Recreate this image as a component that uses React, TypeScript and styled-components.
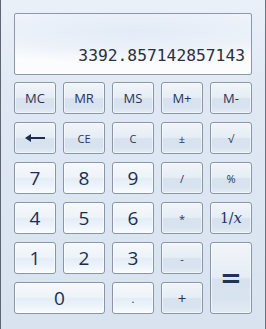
import styled, { createGlobalStyle, css } from 'styled-components';

const GlobalStyle = createGlobalStyle`
  html, body {
    margin: 0;
    padding: 0;
    background: #d9e3ef;
  }
`;

const Window = styled.div`
  box-sizing: border-box;
  width: 266px;
  height: 329px;
  padding: 13px 13px 0 13px;
  border-left: 1px solid #5f6673;
  border-right: 1px solid #6b7280;
  background: linear-gradient(180deg, #eaf0f8 0%, #dfe8f3 30%, #d9e3ef 100%);
  font-family: 'Open Sans', 'Noto Sans', sans-serif;
`;

const Display = styled.div`
  box-sizing: border-box;
  height: 62px;
  margin-bottom: 7px;
  border: 1px solid #8c99ad;
  border-radius: 2px;
  background: radial-gradient(ellipse 95% 55% at 50% 28%, #e2ebf7 0%, #edf2f9 60%, #fbfcfe 100%);
  display: flex;
  align-items: flex-end;
  justify-content: flex-end;
  padding: 0 6px 10px 0;
  font-family: 'DejaVu Sans Mono', 'Liberation Mono', monospace;
  font-size: 16.3px;
  line-height: 1;
  color: #2b303b;
`;

const Keys = styled.div`
  display: grid;
  grid-template-columns: repeat(5, 42px);
  grid-template-rows: repeat(6, 32px);
  column-gap: 7px;
  row-gap: 8px;
`;

type Kind = 'num' | 'op';

const Key = styled.button<{ $kind?: Kind; $cols?: number; $rows?: number; $size?: number }>`
  box-sizing: border-box;
  margin: 0;
  padding: 0;
  border: 1px solid #8896ab;
  border-radius: 3px;
  display: flex;
  align-items: center;
  justify-content: center;
  font-family: 'Open Sans', 'Noto Sans', sans-serif;
  font-size: ${(p) => p.$size ?? 13}px;
  line-height: 1;
  color: #1e3660;
  grid-column: span ${(p) => p.$cols ?? 1};
  grid-row: span ${(p) => p.$rows ?? 1};
  box-shadow: inset 0 0 0 1px rgba(255, 255, 255, 0.55);
  ${(p) =>
    p.$kind === 'num'
      ? css`
          color: #1a2e52;
          background: linear-gradient(
            180deg,
            #f6f9fc 0%,
            #eef3f9 48%,
            #e4ecf6 52%,
            #eef4fb 80%,
            #fbfdff 100%
          );
        `
      : css`
          background: linear-gradient(
            180deg,
            #f1f5fa 0%,
            #e6edf5 48%,
            #d8e2ee 52%,
            #d9e3ef 80%,
            #e2eaf4 100%
          );
        `}
`;

const OneOverX = styled.span`
  font-family: 'DejaVu Serif', 'Liberation Serif', serif;
  font-size: 14px;

  i {
    font-size: 15px;
  }
`;

const Equals = styled.span`
  font-family: 'DejaVu Sans', sans-serif;
  font-weight: 700;
  font-size: 26px;
  color: #1e3358;
`;

const BackArrow = () => (
  <svg width="20" height="8" viewBox="0 0 20 8">
    <path d="M0 4 L6 0 L6 8 Z" fill="#1c2d4d" />
    <rect x="5" y="3" width="15" height="2" fill="#1c2d4d" />
  </svg>
);

export default function App() {
  return (
    <Window>
      <GlobalStyle />
      <Display>3392.857142857143</Display>
      <Keys>
        <Key>MC</Key>
        <Key>MR</Key>
        <Key>MS</Key>
        <Key>M+</Key>
        <Key>M-</Key>

        <Key>
          <BackArrow />
        </Key>
        <Key $size={11}>CE</Key>
        <Key $size={11}>C</Key>
        <Key $size={11}>±</Key>
        <Key $size={11}>√</Key>

        <Key $kind="num" $size={19}>7</Key>
        <Key $kind="num" $size={19}>8</Key>
        <Key $kind="num" $size={19}>9</Key>
        <Key $size={11}>/</Key>
        <Key $size={11}>%</Key>

        <Key $kind="num" $size={19}>4</Key>
        <Key $kind="num" $size={19}>5</Key>
        <Key $kind="num" $size={19}>6</Key>
        <Key $size={11}>*</Key>
        <Key>
          <OneOverX>
            1/<i>x</i>
          </OneOverX>
        </Key>

        <Key $kind="num" $size={19}>1</Key>
        <Key $kind="num" $size={19}>2</Key>
        <Key $kind="num" $size={19}>3</Key>
        <Key $size={11}>-</Key>
        <Key $rows={2}>
          <Equals>=</Equals>
        </Key>

        <Key $kind="num" $size={19} $cols={2}>0</Key>
        <Key $kind="num" $size={11}>.</Key>
        <Key $size={15}>+</Key>
      </Keys>
    </Window>
  );
}
